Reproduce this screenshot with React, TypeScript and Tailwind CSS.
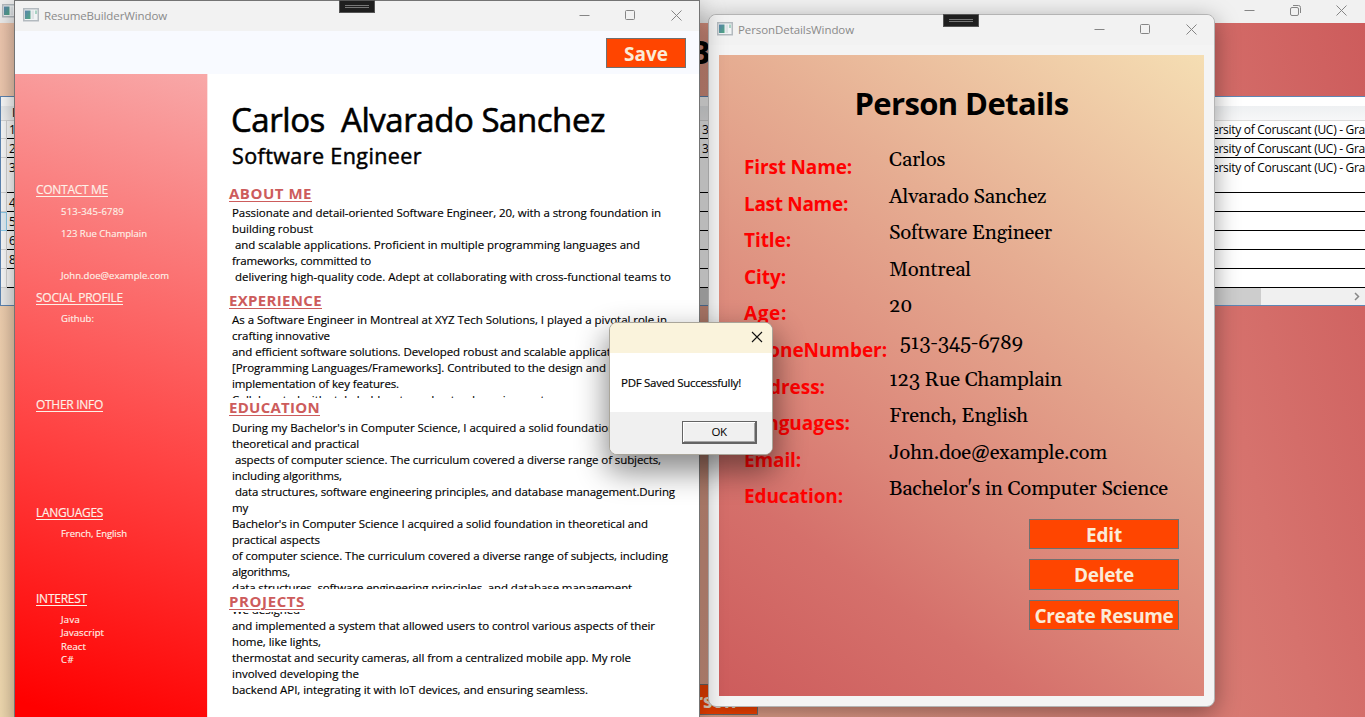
import { useLayoutEffect, useRef, type ReactNode } from "react";

type FitProps = { w?: number; className?: string; children: string };

/* A single line of text whose tracking is adjusted to fill the given width. */
function Fit({ w, className = "", children }: FitProps) {
  const ref = useRef<HTMLSpanElement>(null);
  useLayoutEffect(() => {
    const el = ref.current;
    if (!el || !w) return;
    el.style.letterSpacing = "0px";
    const natural = el.getBoundingClientRect().width;
    el.style.letterSpacing = `${(w - natural) / children.length}px`;
  }, [w, children]);
  return (
    <span ref={ref} className={`inline-block w-max whitespace-pre ${className}`}>
      {children}
    </span>
  );
}

function AppIcon() {
  return (
    <svg width="16" height="14" viewBox="0 0 16 14" className="shrink-0">
      <defs>
        <linearGradient id="pane" x1="0" y1="0" x2="1" y2="1">
          <stop offset="0" stopColor="#5a83ad" />
          <stop offset="1" stopColor="#4fa882" />
        </linearGradient>
      </defs>
      <rect x="0.75" y="0.75" width="14.5" height="12" fill="#f1f4f5" stroke="#b3babf" strokeWidth="1.500" />
      <rect x="2" y="2.500" width="5.500" height="8.500" fill="url(#pane)" />
      <rect x="8.500" y="2.500" width="2.500" height="8.500" fill="#dfe3e6" />
      <rect x="12" y="2.500" width="2" height="3.500" fill="#a9d3c4" />
    </svg>
  );
}

function Controls({ restore = false }: { restore?: boolean }) {
  return (
    <div className="flex items-center gap-[35px] text-[#858585]">
      <svg width="11" height="11" viewBox="0 0 11 11" fill="none" stroke="currentColor">
        <path d="M0.500 5.500h10" />
      </svg>
      {restore ? (
        <svg width="11" height="11" viewBox="0 0 11 11" fill="none" stroke="currentColor">
          <rect x="0.500" y="2.500" width="8" height="8" rx="1.500" />
          <path d="M3 0.500h5.500a2 2 0 0 1 2 2V8" />
        </svg>
      ) : (
        <svg width="11" height="11" viewBox="0 0 11 11" fill="none" stroke="currentColor">
          <rect x="0.500" y="0.500" width="9" height="9" rx="1" />
        </svg>
      )}
      <svg width="11" height="11" viewBox="0 0 11 11" fill="none" stroke="currentColor">
        <path d="M0.500 0.500l10 10M10.500 0.500l-10 10" />
      </svg>
    </div>
  );
}

function Grip({ className }: { className: string }) {
  return (
    <div className={`absolute flex h-[13px] w-9 flex-col items-center justify-center gap-px border border-[#555] bg-[#1f1f1f] ${className}`}>
      <div className="h-px w-6 bg-[#777]" />
      <div className="h-px w-6 bg-[#777]" />
    </div>
  );
}

function ActionButton({ children, w, className }: { children: string; w: number; className: string }) {
  return (
    <button className={`flex items-center justify-center border border-[#707070] bg-[#ff4500] pt-[3px] text-[19px] font-bold leading-none text-[#faebd7] ${className}`}>
      <Fit w={w}>{children}</Fit>
    </button>
  );
}

const gridRows = [
  { id: "1", h: "h-[18px]", pad: "pt-[3px]", age: "3", edu: true },
  { id: "2", h: "h-[19px]", pad: "pt-[4px]", age: "3", edu: true },
  { id: "3", h: "h-[35px]", pad: "pt-[4px]", age: "", edu: true },
  { id: "4", h: "h-[19px]", pad: "pt-[4px]", age: "", edu: false },
  { id: "5", h: "h-[19px]", pad: "pt-[4px]", age: "", edu: false },
  { id: "6", h: "h-[19px]", pad: "pt-[4px]", age: "", edu: false },
  { id: "8", h: "h-[19px]", pad: "pt-[4px]", age: "", edu: false },
  { id: "", h: "h-[19px]", pad: "pt-[4px]", age: "", edu: false },
];

function MainWindow() {
  return (
    <div className="absolute inset-0 flex flex-col">
      <div className="flex h-[23px] shrink-0 items-center justify-between bg-[#f1f1f1] pl-[2px] pr-[18px]">
        <div className="-mt-[2px]">
          <AppIcon />
        </div>
        <div className="-mt-[3px]">
          <Controls restore />
        </div>
      </div>
      <div className="flex grow flex-col bg-[linear-gradient(75deg,#f5deb3_0%,#f3cbb2_12%,#e2a08a_50%,#d6726d_85%,#cd5c5c_100%)]">
        <div className="flex h-[73px] items-center pl-[689px] text-[32px] font-bold leading-none">
          <span className="-mt-[16px]">B</span>
        </div>
        <div className="flex h-[210px] flex-col border-y border-l border-[#5f87b5] bg-white text-[12px] leading-none">
          <div className="h-[9px]" />
          <div className="flex h-[15px] items-center border-b border-[#dcdcdc] bg-gradient-to-b from-[#eef0f2] to-[#f7f7f8] pl-[11px]">I</div>
          {gridRows.map((r, i) => (
            <div key={i} className={`flex ${r.h}`}>
              <div className={`w-[6px] shrink-0 border-b border-r ${r.id === "5" ? "border-t border-[#8fd0f0] bg-[#e8f4fb]" : "border-[#d8d8d8] bg-white"}`} />
              <div className="flex grow border-b border-black">
                <div className={`w-[695px] pl-[2px] ${r.pad}`}>{r.id}</div>
                <div className={`w-[510px] ${r.pad}`}>{r.age}</div>
                <div className={`overflow-hidden ${r.pad}`}>{r.edu && <Fit w={153}>ersity of Coruscant (UC) - Gra</Fit>}</div>
              </div>
            </div>
          ))}
          <div className="flex grow items-center justify-between bg-[#f0f0f0] pr-[5px]">
            <div className="flex h-full w-[1260px]">
              <div className="h-full w-[18px] bg-[#f0f0f0]" />
              <div className="h-full grow bg-[#cdcdcd]" />
            </div>
            <svg width="6" height="9" viewBox="0 0 6 9" fill="none" stroke="#888" strokeWidth="1.500">
              <path d="M1 1l3.500 3.500L1 8" />
            </svg>
          </div>
        </div>
        <div className="flex grow items-end pb-[2px] pl-[608px]">
          <ActionButton w={107} className="h-[31px] w-[150px]">Add Person</ActionButton>
        </div>
      </div>
    </div>
  );
}

type Line = [string, number];

const about: Line[] = [
  ["Passionate and detail-oriented Software Engineer, 20, with a strong foundation in", 429],
  ["building robust", 81],
  [" and scalable applications. Proficient in multiple programming languages and", 408],
  ["frameworks, committed to", 139],
  [" delivering high-quality code. Adept at collaborating with cross-functional teams to", 439],
];
const experience: Line[] = [
  ["As a Software Engineer in Montreal at XYZ Tech Solutions, I played a pivotal role in", 435],
  ["crafting innovative", 98],
  ["and efficient software solutions. Developed robust and scalable applications using", 432],
  ["[Programming Languages/Frameworks]. Contributed to the design and", 374],
  ["implementation of key features.", 167],
  ["Collaborated with stakeholders to understand requirements", 318],
];
const education: Line[] = [
  ["During my Bachelor's in Computer Science, I acquired a solid foundation in", 396],
  ["theoretical and practical", 127],
  [" aspects of computer science. The curriculum covered a diverse range of subjects,", 429],
  ["including algorithms,", 110],
  [" data structures, software engineering principles, and database management.During", 443],
  ["my", 16],
  ["Bachelor's in Computer Science I acquired a solid foundation in theoretical and", 416],
  ["practical aspects", 88],
  ["of computer science. The curriculum covered a diverse range of subjects, including", 436],
  ["algorithms,", 58],
  ["data structures, software engineering principles, and database management.", 403],
];
const projects: Line[] = [
  ["We designed", 68],
  ["and implemented a system that allowed users to control various aspects of their", 423],
  ["home, like lights,", 89],
  ["thermostat and security cameras, all from a centralized mobile app. My role", 399],
  ["involved developing the", 127],
  ["backend API, integrating it with IoT devices, and ensuring seamless.", 356],
];

function Section({ title, w, lines, className, textClass, shift = "" }: { title: string; w: number; lines: Line[]; className: string; textClass: string; shift?: string }) {
  return (
    <section className={`flex shrink-0 flex-col ${className}`}>
      <h3 className="flex h-5 shrink-0 items-center text-[15px] font-bold leading-[18px] text-[#cd5c5c]">
        <Fit w={w} className="-mt-[2px] underline decoration-1 underline-offset-2">{title}</Fit>
      </h3>
      <div className={`overflow-hidden pl-[3px] ${textClass}`}>
        <div className={`flex flex-col text-[11.500px] leading-4 [-webkit-text-stroke:0.15px] ${shift}`}>
          {lines.map(([t, lw]) => (
            <Fit key={t} w={lw}>{t}</Fit>
          ))}
        </div>
      </div>
    </section>
  );
}

function SideHeading({ children, w }: { children: string; w: number }) {
  return (
    <h4 className="flex h-5 items-center text-[12px] leading-5">
      <Fit w={w} className="underline decoration-1 underline-offset-2">{children}</Fit>
    </h4>
  );
}

function SideGroup({ children, className }: { children: ReactNode; className: string }) {
  return <div className={`flex shrink-0 flex-col ${className}`}>{children}</div>;
}

function ResumeWindow() {
  return (
    <div className="absolute left-[14px] top-0 flex h-[730px] w-[686px] flex-col border border-[#747474] bg-white shadow-[0_6px_24px_rgba(0,0,0,0.4)]">
      <Grip className="left-[324px] -top-px" />
      <div className="flex h-[30px] shrink-0 items-center justify-between bg-[#f2f2f2] pb-[2px] pl-2 pr-[17px]">
        <div className="flex items-center gap-[5px] text-[11.500px] text-[#8a8a8a]">
          <AppIcon />
          <Fit w={123} className="pt-px">ResumeBuilderWindow</Fit>
        </div>
        <Controls />
      </div>
      <div className="flex h-[43px] shrink-0 items-center justify-end bg-[#f8faff] pr-[13px]">
        <ActionButton w={44} className="h-[30px] w-[80px]">Save</ActionButton>
      </div>
      <div className="flex grow">
        <aside className="flex w-[192px] shrink-0 flex-col bg-[linear-gradient(196deg,#f8a8a8_0%,#fa8080_22%,#ff4444_56%,#ff0000_96%)] pl-[21px] pt-[106px] text-[#fdf1e8] [-webkit-text-stroke:0.15px]">
          <SideGroup className="h-[108px]">
            <SideHeading w={72}>CONTACT ME</SideHeading>
            <div className="flex flex-col pl-[25px] pt-px text-[9.500px] leading-[21.500px]">
              <Fit w={63}>513-345-6789</Fit>
              <Fit w={86}>123 Rue Champlain</Fit>
              <div className="h-[21px]" />
              <Fit w={108}>John.doe@example.com</Fit>
            </div>
          </SideGroup>
          <SideGroup className="h-[107px]">
            <SideHeading w={87}>SOCIAL PROFILE</SideHeading>
            <div className="flex flex-col pl-[25px] text-[9.500px] leading-[21.500px]">
              <Fit w={33}>Github:</Fit>
            </div>
          </SideGroup>
          <SideGroup className="h-[108px]">
            <SideHeading w={67}>OTHER INFO</SideHeading>
          </SideGroup>
          <SideGroup className="h-[86px]">
            <SideHeading w={67}>LANGUAGES</SideHeading>
            <div className="flex flex-col pl-[25px] text-[9.500px] leading-[21.500px]">
              <Fit w={66}>French, English</Fit>
            </div>
          </SideGroup>
          <SideGroup className="grow">
            <SideHeading w={51}>INTEREST</SideHeading>
            <div className="flex flex-col pl-[25px] pt-1 text-[9.500px] leading-[13.300px]">
              <Fit w={19}>Java</Fit>
              <Fit w={43}>Javascript</Fit>
              <Fit w={25}>React</Fit>
              <Fit w={13}>C#</Fit>
            </div>
          </SideGroup>
        </aside>
        <main className="flex grow flex-col overflow-hidden border-l border-[#fbe0e0] pl-[21px] pt-[24px]">
          <h1 className="flex h-[44px] shrink-0 items-center pb-[2px] pl-[2px] text-[33px] leading-none [-webkit-text-stroke:0.6px]">
            <Fit w={374}>Carlos  Alvarado Sanchez</Fit>
          </h1>
          <h2 className="flex h-[28px] shrink-0 items-center pl-[3px] text-[21.500px] leading-none [-webkit-text-stroke:0.5px]">
            <Fit w={190}>Software Engineer</Fit>
          </h2>
          <Section title="ABOUT ME" w={83} lines={about} className="mt-[14px] h-[107px]" textClass="mt-px" />
          <Section title="EXPERIENCE" w={93} lines={experience} className="h-[107px]" textClass="mt-px h-[86px]" />
          <Section title="EDUCATION" w={91} lines={education} className="h-[194px]" textClass="mt-[2px] h-[169px]" />
          <Section title="PROJECTS" w={76} lines={projects} className="grow" textClass="" shift="-mt-[10px]" />
        </main>
      </div>
    </div>
  );
}

const fields: { label: string; lw: number; value: string; vw: number; indent?: boolean }[] = [
  { label: "First Name:", lw: 108, value: "Carlos", vw: 56 },
  { label: "Last Name:", lw: 104, value: "Alvarado Sanchez", vw: 157 },
  { label: "Title:", lw: 47, value: "Software Engineer", vw: 163 },
  { label: "City:", lw: 42, value: "Montreal", vw: 82 },
  { label: "Age:", lw: 43, value: "20", vw: 23 },
  { label: "PhoneNumber:", lw: 143, value: "513-345-6789", vw: 123, indent: true },
  { label: "Address:", lw: 81, value: "123 Rue Champlain", vw: 173 },
  { label: "Languages:", lw: 106, value: "French, English", vw: 139 },
  { label: "Email:", lw: 57, value: "John.doe@example.com", vw: 218 },
  { label: "Education:", lw: 99, value: "Bachelor's in Computer Science", vw: 279 },
];

function PersonWindow() {
  return (
    <div className="absolute left-[708px] top-[14px] flex h-[693px] w-[507px] flex-col rounded-lg border border-[#b4b4b4] bg-[#f4f4f4] shadow-[0_6px_24px_rgba(0,0,0,0.38)]">
      <Grip className="left-[234px] -top-px" />
      <div className="flex h-[30px] shrink-0 items-center justify-between rounded-t-lg bg-[#f2f2f2] pb-[2px] pl-2 pr-[17px]">
        <div className="flex items-center gap-[5px] text-[11.500px] text-[#8a8a8a]">
          <AppIcon />
          <Fit w={116} className="pt-px">PersonDetailsWindow</Fit>
        </div>
        <Controls />
      </div>
      <div className="mx-[10px] mt-[10px] flex h-[641px] w-[485px] flex-col bg-[linear-gradient(35deg,#cd5c5c_0%,#d5706b_22%,#db8478_35%,#e6ad92_66%,#f5deb3_100%)]">
        <h1 className="flex h-[98px] items-center justify-center pb-[2px] text-[31px] font-bold leading-none">
          <Fit w={214}>Person Details</Fit>
        </h1>
        <div className="flex flex-col">
          {fields.map((f) => (
            <div key={f.label} className="flex h-[36.600px] pl-[25px]">
              <div className={`shrink-0 pt-[4px] text-[19px] font-bold leading-[20px] text-[#ff0000] ${f.indent ? "w-[156px]" : "w-[145px]"}`}>
                <Fit w={f.lw}>{f.label}</Fit>
              </div>
              <div className='-mt-[3px] font-["Gelasio","Georgia","Liberation_Serif",serif] text-[20.500px] leading-[20px] text-black'>
                <Fit w={f.vw}>{f.value}</Fit>
              </div>
            </div>
          ))}
        </div>
        <div className="flex flex-col items-end gap-[10px] pr-[25px]">
          <ActionButton w={36} className="h-[30px] w-[150px]">Edit</ActionButton>
          <ActionButton w={60} className="h-[31px] w-[150px]">Delete</ActionButton>
          <ActionButton w={139} className="h-[30px] w-[150px]">Create Resume</ActionButton>
        </div>
      </div>
    </div>
  );
}

function MessageDialog() {
  return (
    <div className="absolute left-[609px] top-[322px] flex h-[133px] w-[164px] flex-col overflow-hidden rounded-lg border border-[#a9a59a] bg-white text-[11.500px] text-black">
      <div className="flex h-[30px] shrink-0 items-center justify-end bg-[#faf3dc] pb-[2px] pr-[9px]">
        <svg width="12" height="12" viewBox="0 0 12 12" fill="none" stroke="#111" strokeWidth="1.100">
          <path d="M1 1l10 10M11 1L1 11" />
        </svg>
      </div>
      <div className="flex grow items-center pl-[11px] [-webkit-text-stroke:0.15px]">
        <Fit w={120}>PDF Saved Successfully!</Fit>
      </div>
      <div className="flex h-[42px] shrink-0 items-center justify-end bg-[#f0f0f0] pb-[2px] pr-[15px]">
        <button className="flex h-[23px] w-[75px] items-center justify-center border border-b-2 border-r-2 border-[#646464] bg-[#f0f0f0] pt-px leading-none shadow-[inset_1px_1px_0_#fff,inset_-1px_-1px_0_#a5a5a5]">
          <Fit w={15}>OK</Fit>
        </button>
      </div>
    </div>
  );
}

export default function App() {
  return (
    <div className='relative h-[717px] w-[1365px] overflow-hidden bg-white font-["Segoe_UI","Open_Sans",sans-serif] text-black'>
      <MainWindow />
      <PersonWindow />
      <ResumeWindow />
      <div className="absolute left-[610px] top-[323px] h-[131px] w-[162px] rounded-lg shadow-[0_14px_30px_4px_rgba(0,0,0,0.45)]" />
      <MessageDialog />
    </div>
  );
}
